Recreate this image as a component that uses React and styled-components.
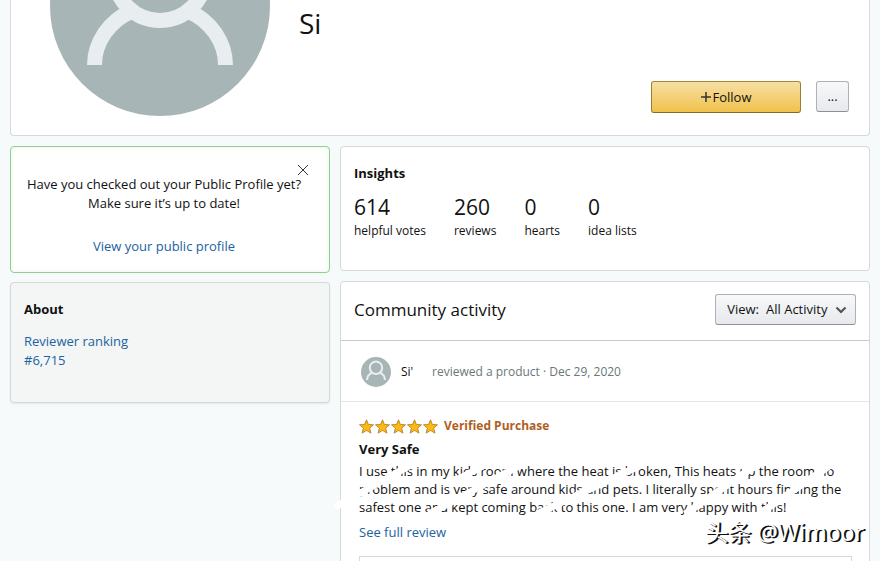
import React from 'react'
import styled, { createGlobalStyle, css } from 'styled-components'

const GlobalStyle = createGlobalStyle`
  * {
    box-sizing: border-box;
  }

  body {
    margin: 0;
    overflow: hidden;
    background-color: #f6fafb;
    color: #111;
    font-family: 'Open Sans', 'Noto Sans', sans-serif;
    font-size: 13px;
    line-height: 19px;
  }

  button, select {
    font: inherit;
    color: inherit;
  }
`

const Page = styled.div`
  position: relative;
  height: 100vh;
  overflow: hidden;
  padding: 0 10px;
`

const cardBase = css`
  background-color: #fff;
  border: 1px solid #d5d9d9;
  border-radius: 4px;
`

/* ---- profile header ---- */

const Header = styled.header`
  ${cardBase}
  display: flex;
  border-top: 0;
  border-top-left-radius: 0;
  border-top-right-radius: 0;
  padding: 0 20px 19px 39px;
`

const Name = styled.h1`
  flex: 1;
  margin: 0 0 0 29px;
  padding-top: 5px;
  font-size: 28px;
  line-height: 36px;
  font-weight: 400;
`

const Actions = styled.div`
  display: flex;
  align-self: flex-end;
  gap: 15px;
  padding-bottom: 3px;
`

const Button = styled.button`
  width: 33px;
  height: 31px;
  padding: 0;
  border: 1px solid #adb1b8;
  border-bottom-color: #8d9096;
  border-radius: 3px;
  background: linear-gradient(#f7f8fa, #e7e9ec);
  cursor: pointer;
`

const FollowButton = styled(Button)`
  display: flex;
  align-items: center;
  justify-content: center;
  gap: 2px;
  width: 150px;
  height: 32px;
  border-color: #a88734 #9c7e31 #846a29;
  background: linear-gradient(#f7dfa5, #f0c14b);
`

/* ---- columns ---- */

const Columns = styled.div`
  display: flex;
  align-items: flex-start;
  gap: 10px;
  margin-top: 10px;
`

const Side = styled.aside`
  display: flex;
  flex-direction: column;
  gap: 9px;
  width: 320px;
`

const Main = styled.main`
  display: flex;
  flex: 1;
  flex-direction: column;
  gap: 10px;
`

const Link = styled.a`
  color: #2162a1;
  text-decoration: none;

  &:hover {
    text-decoration: underline;
  }
`

const Notice = styled.section`
  ${cardBase}
  position: relative;
  padding: 28px 10px 16px;
  border-color: #8fcf8f;
  box-shadow: inset 0 0 4px #e4f5e4;
  text-align: center;

  p {
    margin: 0 0 24px;
    padding-right: 12px;
  }

  ${Link} {
    display: block;
    padding-right: 12px;
  }
`

const Close = styled.button`
  position: absolute;
  top: 16px;
  right: 19px;
  display: flex;
  padding: 1px;
  border: 0;
  background: none;
  cursor: pointer;
`

const About = styled.section`
  ${cardBase}
  padding: 17px 13px 32px;
  background-color: #f3f6f4;
  box-shadow: 0 1px 2px #e3e6e6;

  ${Link} {
    display: block;
  }
`

const Heading = styled.h2`
  margin: 0 0 ${p => p.$gap}px;
  font-size: 13px;
  font-weight: 700;
`

const Insights = styled.section`
  ${cardBase}
  padding: 17px 13px 30px;
`

const Stats = styled.dl`
  display: flex;
  gap: 28px;
  margin: 0;
`

const Stat = styled.div`
  display: flex;
  flex-direction: column-reverse;
  font-size: 12px;

  dd {
    margin: 0;
    font-size: 21px;
    line-height: 28px;
  }
`

/* ---- activity feed ---- */

const Activity = styled.section`
  ${cardBase}
`

const ActivityHead = styled.div`
  display: flex;
  align-items: center;
  justify-content: space-between;
  padding: 12px 13px 15px;
  border-bottom: 1px solid #c6c9c9;

  h2 {
    margin: 0;
    font-size: 17px;
    line-height: 24px;
    font-weight: 400;
  }
`

const Picker = styled.label`
  display: flex;
  align-items: center;
  gap: 7px;
  height: 31px;
  padding: 0 8px 0 11px;
  border: 1px solid #adb1b8;
  border-bottom-color: #8d9096;
  border-radius: 3px;
  background: linear-gradient(#f7f8fa, #e7e9ec);

  select {
    padding: 0;
    border: 0;
    background: none;
    appearance: none;
    outline: 0;
  }
`

const Byline = styled.div`
  display: flex;
  align-items: center;
  height: 61px;
  padding: 1px 20px 0;
  border-bottom: 1px solid #e3e6e6;
  font-size: 12px;
  color: #6c7778;
`

const Author = styled.span`
  width: 31px;
  margin-left: 10px;
  color: #111;
`

const Review = styled.article`
  padding: 15px 17px 0 18px;

  h3 {
    margin: 6px 0 3px;
    font-size: 13px;
    line-height: 19px;
  }
`

const Rating = styled.div`
  display: flex;
  align-items: center;
  gap: 5px;
  font-size: 12px;
  line-height: 17px;
  font-weight: 700;
  color: #b05e22;
`

const Body = styled.p`
  position: relative;
  margin: 0 0 7px;
  line-height: 18px;
`

const Streaks = styled.svg`
  position: absolute;
  top: 0;
  left: 0;
  overflow: visible;
  pointer-events: none;
`

const Product = styled.div`
  height: 120px;
  margin-top: 14px;
  border: 1px solid #d5d9d9;
`

const Watermark = styled.div`
  position: absolute;
  right: 16px;
  bottom: 14px;
  color: #fff;
  font-family: 'Noto Sans', 'Noto Sans CJK SC', sans-serif;
  font-size: 23px;
  line-height: 30px;
  text-shadow: 1px 1px 0 #111, 2px 1px 0 #111;
`

const Avatar = ({ size, cropped }) => (
  <svg
    width={size}
    height={cropped ? 116 : size}
    viewBox={cropped ? '0 104 220 116' : '0 0 220 220'}
    aria-hidden="true"
  >
    <circle cx="110" cy="110" r="110" fill="#a8b5b6" />
    <g fill="none" stroke="#e8edef" strokeWidth="15">
      <circle cx="110" cy="79" r="45.5" />
      <path d="M44.500 169A65.500 60 0 0 1 82 115M175.500 169A65.500 60 0 0 0 138 115" />
    </g>
  </svg>
)

const Stars = () => (
  <svg width="80" height="16" viewBox="0 0 80 16" role="img" aria-label="5 out of 5 stars">
    {[0, 16, 32, 48, 64].map(x => (
      <path
        key={x}
        transform={`translate(${x} 1)`}
        d="M7.500 .8l1.900 4.700 5.100.3-3.900 3.300 1.300 5-4.400-2.700-4.400 2.700 1.300-5L.5 5.800l5.100-.3z"
        fill="#fcb813"
        stroke="#bd8a35"
        strokeLinejoin="round"
      />
    ))}
  </svg>
)

const stats = [
  ['614', 'helpful votes'],
  ['260', 'reviews'],
  ['0', 'hearts'],
  ['0', 'idea lists'],
]

function App() {
  return (
    <Page>
      <GlobalStyle />
      <Header>
        <Avatar size={220} cropped />
        <Name>Si</Name>
        <Actions>
          <FollowButton type="button">
            <svg width="10" height="10" viewBox="0 0 10 10" aria-hidden="true">
              <path d="M5 0v10M0 5h10" stroke="#333" strokeWidth="1.500" />
            </svg>
            Follow
          </FollowButton>
          <Button type="button" aria-label="More options">...</Button>
        </Actions>
      </Header>

      <Columns>
        <Side>
          <Notice>
            <Close type="button" aria-label="Close">
              <svg width="12" height="12" viewBox="0 0 12 12" aria-hidden="true">
                <path d="M1 1l10 10M11 1L1 11" stroke="#333" />
              </svg>
            </Close>
            <p>
              Have you checked out your Public Profile yet?<br />
              Make sure it’s up to date!
            </p>
            <Link href="#profile">View your public profile</Link>
          </Notice>
          <About>
            <Heading $gap={13}>About</Heading>
            <Link href="#ranking">Reviewer ranking</Link>
            <Link href="#ranking">#6,715</Link>
          </About>
        </Side>

        <Main>
          <Insights>
            <Heading $gap={10}>Insights</Heading>
            <Stats>
              {stats.map(([value, label]) => (
                <Stat key={label}>
                  <dt>{label}</dt>
                  <dd>{value}</dd>
                </Stat>
              ))}
            </Stats>
          </Insights>

          <Activity>
            <ActivityHead>
              <h2>Community activity</h2>
              <Picker>
                View:
                <select defaultValue="all">
                  <option value="all">All Activity</option>
                </select>
                <svg width="12" height="8" viewBox="0 0 12 8" aria-hidden="true">
                  <path d="M1.500 1.500L6 6l4.500-4.500" fill="none" stroke="#555" strokeWidth="2.200" />
                </svg>
              </Picker>
            </ActivityHead>
            <Byline>
              <Avatar size={30} />
              <Author>Si'</Author>
              reviewed a product · Dec 29, 2020
            </Byline>
            <Review>
              <Rating>
                <Stars />
                Verified Purchase
              </Rating>
              <h3>Very Safe</h3>
              <Body>
                I use this in my kids room where the heat is broken, This heats up the room no
                problem and is very safe around kids and pets. I literally spent hours finding the
                safest one and kept coming back to this one. I am very happy with this!
                <Streaks width="100%" height="54" aria-hidden="true">
                  <path
                    d="M-24 45L50 4M70 52L126 22L160 4M90 22L124 4M178 52L280 4M326 52L396 4M400 52L470 4"
                    fill="none"
                    stroke="#fff"
                    strokeWidth="7"
                  />
                </Streaks>
              </Body>
              <Link href="#review">See full review</Link>
              <Product />
            </Review>
          </Activity>
        </Main>
      </Columns>
      <Watermark>头条 @Wimoor</Watermark>
    </Page>
  )
}

export default App
